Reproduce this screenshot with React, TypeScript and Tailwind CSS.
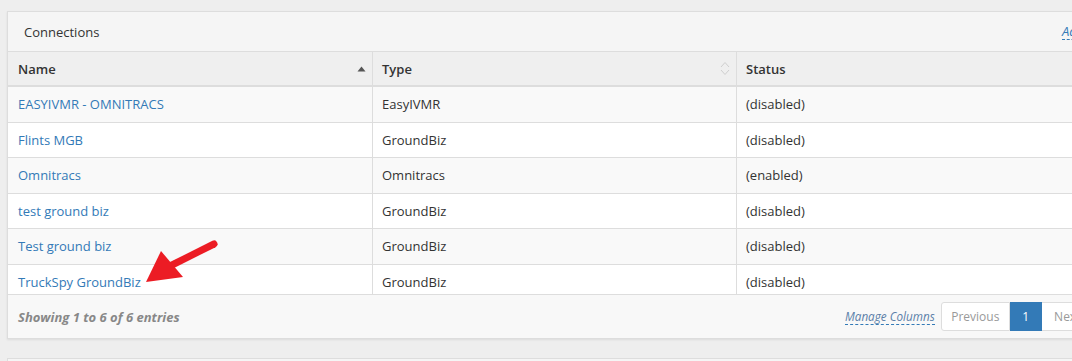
type Connection = {
  name: string;
  type: string;
  status: string;
  height: string;
};

const rows: Connection[] = [
  { name: "EASYIVMR - OMNITRACS", type: "EasyIVMR", status: "(disabled)", height: "h-[36px]" },
  { name: "Flints MGB", type: "GroundBiz", status: "(disabled)", height: "h-[35px]" },
  { name: "Omnitracs", type: "Omnitracs", status: "(enabled)", height: "h-[36px]" },
  { name: "test ground biz", type: "GroundBiz", status: "(disabled)", height: "h-[35px]" },
  { name: "Test ground biz", type: "GroundBiz", status: "(disabled)", height: "h-[36px]" },
  { name: "TruckSpy GroundBiz", type: "GroundBiz", status: "(disabled)", height: "h-[30px]" },
];

function SortUp() {
  return (
    <svg width="9" height="6" viewBox="0 0 9 6" className="shrink-0">
      <path d="M0.5 5.5 L4.5 0.5 L8.5 5.5 Z" fill="#555" />
    </svg>
  );
}

function SortBoth() {
  return (
    <svg width="10" height="15" viewBox="0 0 10 15" className="shrink-0">
      <path d="M1 6 L5 1.5 L9 6" fill="none" stroke="#cfcfcf" strokeWidth="1" />
      <path d="M1 9 L5 13.5 L9 9" fill="none" stroke="#cfcfcf" strokeWidth="1" />
    </svg>
  );
}

export default function App() {
  return (
    <div
      className="relative h-[361px] w-[1072px] overflow-hidden bg-[#eeeeee] text-[13px] text-[#333]"
      style={{ fontFamily: '"Open Sans", "Liberation Sans", sans-serif' }}
    >
      <div className="ml-[7px] mt-[11px] w-[1110px] border border-[#dddddd] bg-white shadow-[0_1px_2px_rgba(0,0,0,0.08)]">
        <div className="flex h-[40px] items-center border-b border-[#dddddd] bg-[#f5f5f5] pl-[16px]">
          <span className="w-[1038px] shrink-0 leading-[18px]">Connections</span>
          <span className="shrink-0 border-b border-dashed border-[#337ab7] italic leading-[16px] text-[#337ab7]">Add</span>
        </div>

        <div className="flex h-[35px] border-b-2 border-[#dddddd] bg-[#efefef] font-semibold">
          <div className="flex w-[365px] items-center justify-between border-r border-[#dddddd] pl-[10px] pr-[6px]">
            <span className="leading-[18px]">Name</span>
            <SortUp />
          </div>
          <div className="flex w-[364px] items-center justify-between border-r border-[#dddddd] pl-[9px] pr-[6px]">
            <span className="leading-[18px]">Type</span>
            <SortBoth />
          </div>
          <div className="flex flex-1 items-center pl-[9px]">
            <span className="leading-[18px]">Status</span>
          </div>
        </div>

        {rows.map((row, i) => (
          <div
            key={row.name}
            className={`flex border-b border-[#dddddd] ${row.height} ${i % 2 === 0 ? "bg-[#f9f9f9]" : "bg-white"}`}
          >
            <div className="w-[365px] border-r border-[#dddddd] pl-[10px] pt-[8px] leading-[18px] text-[#337ab7]">{row.name}</div>
            <div className="w-[364px] border-r border-[#dddddd] pl-[9px] pt-[8px] leading-[18px]">{row.type}</div>
            <div className="flex-1 pl-[9px] pt-[8px] leading-[18px]">{row.status}</div>
          </div>
        ))}

        <div className="flex h-[43px] items-center bg-[#f8f8f8] pl-[10px]">
          <span className="w-[827px] shrink-0 font-bold italic leading-[18px] text-[#888]">Showing 1 to 6 of 6 entries</span>
          <span className="border-b border-dashed border-[#337ab7] text-[11.7px] italic leading-[15px] text-[#5b7fa8]">Manage Columns</span>
          <div className="ml-[6px] flex h-[29px] text-[12px] leading-[27px]">
            <span className="w-[69px] rounded-l-[3px] border border-[#dddddd] bg-white text-center text-[#999]">Previous</span>
            <span className="w-[32px] border border-[#337ab7] bg-[#337ab7] text-center text-white">1</span>
            <span className="w-[52px] rounded-r-[3px] border border-l-0 border-[#dddddd] bg-white text-center text-[#999]">Next</span>
          </div>
        </div>
      </div>

      <div className="ml-[7px] mt-[19px] h-[20px] w-[1110px] border border-[#dddddd] bg-[#f5f5f5]" />

      <svg className="absolute left-0 top-0" width="260" height="300" viewBox="0 0 260 300">
        <line x1="214" y1="244" x2="170" y2="266" stroke="#ec1c24" strokeWidth="7" strokeLinecap="round" />
        <polygon points="161,251 146,282 183,277" fill="#ec1c24" />
      </svg>
    </div>
  );
}
